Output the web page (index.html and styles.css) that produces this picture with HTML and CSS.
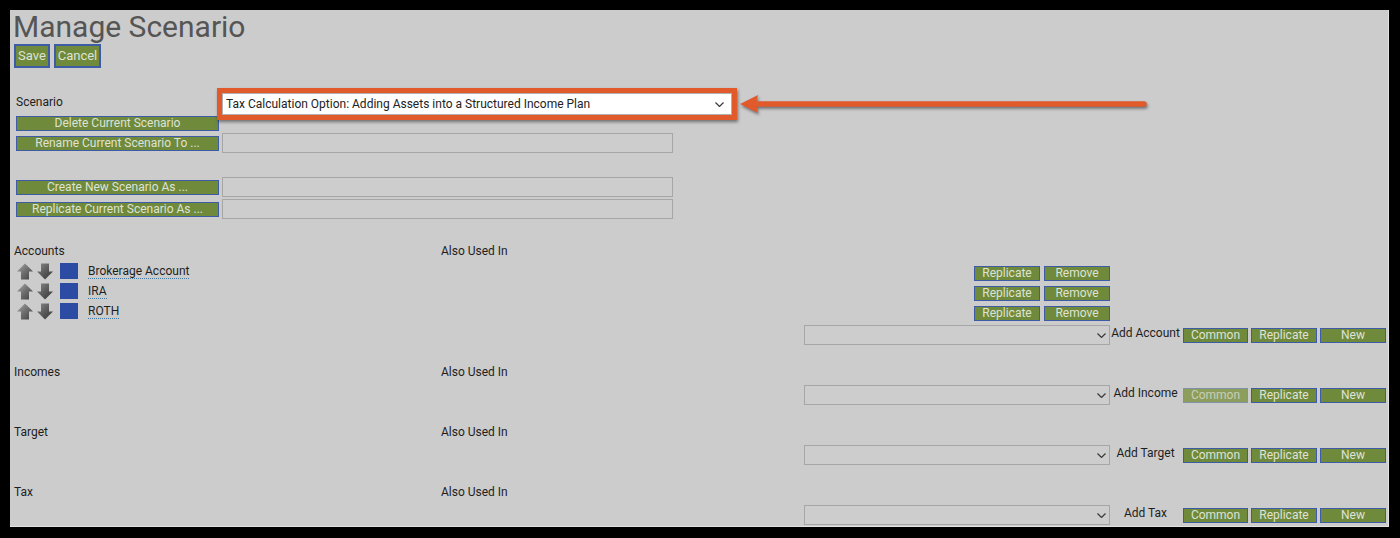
FILE: index.html
```html
<!DOCTYPE html>
<html>
<head>
<meta charset="utf-8">
<title>Manage Scenario</title>
<link rel="stylesheet" href="styles.css">
</head>
<body>
<svg class="defs" width="0" height="0" aria-hidden="true">
  <defs>
    <linearGradient id="gu" x1="0" y1="0" x2="1" y2="1"><stop offset="0" stop-color="#a8a8a8"/><stop offset="0.5" stop-color="#6e6e6e"/><stop offset="1" stop-color="#404040"/></linearGradient>
    <linearGradient id="gd" x1="0" y1="0" x2="1" y2="1"><stop offset="0" stop-color="#8a8a8a"/><stop offset="0.5" stop-color="#5a5a5a"/><stop offset="1" stop-color="#353535"/></linearGradient>
  </defs>
</svg>
<div class="panel">
  <h1 class="title">Manage Scenario</h1>
  <div class="toolbar">
    <button class="btn btn-lg btn-save">Save</button>
    <button class="btn btn-lg btn-cancel">Cancel</button>
  </div>

  <div class="scenario">
    <div class="sc-row sc-first">
      <span class="sc-label">Scenario</span>
      <span class="hl"><select class="sc-select"><option>Tax Calculation Option: Adding Assets into a Structured Income Plan</option></select><svg class="chev chev-sc" viewBox="0 0 9 5"><path d="M0.5 0.5 L4.5 4.5 L8.5 0.5"/></svg></span>
    </div>
    <div class="sc-row sc-delete">
      <button class="btn btn-wide">Delete Current Scenario</button>
    </div>
    <div class="sc-row sc-rename">
      <button class="btn btn-wide">Rename Current Scenario To ...</button>
      <input class="sc-input" type="text">
    </div>
    <div class="sc-row sc-create">
      <button class="btn btn-wide">Create New Scenario As ...</button>
      <input class="sc-input" type="text">
    </div>
    <div class="sc-row sc-repl">
      <button class="btn btn-wide">Replicate Current Scenario As ...</button>
      <input class="sc-input" type="text">
    </div>
  </div>

  <section class="group group-first">
    <div class="g-row g-head g-head-first"><span class="g-title">Accounts</span><span class="g-used">Also Used In</span></div>
    <div class="g-row g-item">
      <span class="g-name">
        <svg class="mv" viewBox="0 0 16 17"><path d="M8 0.5 L16 8.5 L12 8.5 L12 16.5 L4 16.5 L4 8.5 L0 8.5 Z" fill="url(#gu)"/></svg>
        <svg class="mv" viewBox="0 0 16 17"><path d="M4 0.5 L12 0.5 L12 8.5 L16 8.5 L8 16.5 L0 8.5 L4 8.5 Z" fill="url(#gd)"/></svg>
        <span class="swatch"></span>
        <span class="acct">Brokerage Account</span>
      </span>
      <span class="g-actions"><button class="btn btn-sm">Replicate</button><button class="btn btn-sm">Remove</button></span>
    </div>
    <div class="g-row g-item">
      <span class="g-name">
        <svg class="mv" viewBox="0 0 16 17"><path d="M8 0.5 L16 8.5 L12 8.5 L12 16.5 L4 16.5 L4 8.5 L0 8.5 Z" fill="url(#gu)"/></svg>
        <svg class="mv" viewBox="0 0 16 17"><path d="M4 0.5 L12 0.5 L12 8.5 L16 8.5 L8 16.5 L0 8.5 L4 8.5 Z" fill="url(#gd)"/></svg>
        <span class="swatch"></span>
        <span class="acct">IRA</span>
      </span>
      <span class="g-actions"><button class="btn btn-sm">Replicate</button><button class="btn btn-sm">Remove</button></span>
    </div>
    <div class="g-row g-item">
      <span class="g-name">
        <svg class="mv" viewBox="0 0 16 17"><path d="M8 0.5 L16 8.5 L12 8.5 L12 16.5 L4 16.5 L4 8.5 L0 8.5 Z" fill="url(#gu)"/></svg>
        <svg class="mv" viewBox="0 0 16 17"><path d="M4 0.5 L12 0.5 L12 8.5 L16 8.5 L8 16.5 L0 8.5 L4 8.5 Z" fill="url(#gd)"/></svg>
        <span class="swatch"></span>
        <span class="acct">ROTH</span>
      </span>
      <span class="g-actions"><button class="btn btn-sm">Replicate</button><button class="btn btn-sm">Remove</button></span>
    </div>
    <div class="g-row g-add">
      <span></span>
      <span class="sel-wrap"><select class="add-select"><option></option></select><svg class="chev" viewBox="0 0 9 5"><path d="M0.5 0.5 L4.5 4.5 L8.5 0.5"/></svg></span>
      <span class="add-label">Add Account</span>
      <span class="add-btns"><button class="btn btn-add">Common</button><button class="btn btn-add btn-rep">Replicate</button><button class="btn btn-add btn-new">New</button></span>
    </div>
  </section>

  <section class="group">
    <div class="g-row g-head"><span class="g-title">Incomes</span><span class="g-used">Also Used In</span></div>
    <div class="g-row g-add">
      <span></span>
      <span class="sel-wrap"><select class="add-select"><option></option></select><svg class="chev" viewBox="0 0 9 5"><path d="M0.5 0.5 L4.5 4.5 L8.5 0.5"/></svg></span>
      <span class="add-label">Add Income</span>
      <span class="add-btns"><button class="btn btn-add btn-dis">Common</button><button class="btn btn-add btn-rep">Replicate</button><button class="btn btn-add btn-new">New</button></span>
    </div>
  </section>

  <section class="group">
    <div class="g-row g-head"><span class="g-title">Target</span><span class="g-used">Also Used In</span></div>
    <div class="g-row g-add">
      <span></span>
      <span class="sel-wrap"><select class="add-select"><option></option></select><svg class="chev" viewBox="0 0 9 5"><path d="M0.5 0.5 L4.5 4.5 L8.5 0.5"/></svg></span>
      <span class="add-label">Add Target</span>
      <span class="add-btns"><button class="btn btn-add">Common</button><button class="btn btn-add btn-rep">Replicate</button><button class="btn btn-add btn-new">New</button></span>
    </div>
  </section>

  <section class="group">
    <div class="g-row g-head"><span class="g-title">Tax</span><span class="g-used">Also Used In</span></div>
    <div class="g-row g-add">
      <span></span>
      <span class="sel-wrap"><select class="add-select"><option></option></select><svg class="chev" viewBox="0 0 9 5"><path d="M0.5 0.5 L4.5 4.5 L8.5 0.5"/></svg></span>
      <span class="add-label">Add Tax</span>
      <span class="add-btns"><button class="btn btn-add">Common</button><button class="btn btn-add btn-rep">Replicate</button><button class="btn btn-add btn-new">New</button></span>
    </div>
  </section>

  <svg class="callout" viewBox="0 0 425 30" width="425" height="30">
    <path d="M10 16 L28 7 L26 16 L28 25 Z" fill="#e05a2c"/>
    <line x1="25" y1="16" x2="414" y2="16" stroke="#e05a2c" stroke-width="5.5" stroke-linecap="round"/>
  </svg>
</div>
</body>
</html>
```

FILE: styles.css
```css
html, body {
  margin: 0;
  padding: 0;
  background: #000;
}

body {
  font-family: Roboto, "Liberation Sans", Arial, sans-serif;
  color: #1e1e1e;
  width: 1400px;
  height: 538px;
  overflow: hidden;
}

.defs {
  position: absolute;
  width: 0;
  height: 0;
}

.panel {
  position: relative;
  margin: 10px 0 0 10px;
  width: 1379px;
  height: 517px;
  box-sizing: border-box;
  background: #cccccc;
  border-right: 1px solid #e2e2e2;
  border-bottom: 1px solid #e2e2e2;
  padding-left: 4px;
  padding-top: 2px;
}

.title {
  margin: 0 0 0 -1px;
  height: 30px;
  font-size: 30px;
  line-height: 30px;
  font-weight: 400;
  color: #555555;
}

.toolbar {
  display: flex;
  gap: 4px;
  margin-top: 2px;
}

.btn {
  font-family: Roboto, "Liberation Sans", Arial, sans-serif;
  font-size: 12px;
  line-height: 13px;
  color: #dfe2d6;
  background: #6f8a3b;
  border: 1px solid #3e5ca6;
  padding: 0;
  margin: 0;
  height: 15px;
  box-sizing: border-box;
  text-align: center;
  white-space: nowrap;
}

.btn-lg {
  height: 24px;
  font-size: 13px;
  line-height: 20px;
  border-width: 2px;
}

.btn-save {
  width: 36px;
}

.btn-cancel {
  width: 47px;
}

.btn-wide {
  width: 203px;
}

.scenario {
  padding-left: 2px;
  margin-top: 25px;
}

.sc-row {
  display: grid;
  grid-template-columns: 206px auto;
  align-items: center;
}

.sc-first {
  height: 22px;
  align-items: start;
}

.sc-label {
  font-size: 12px;
  line-height: 16px;
  padding-top: 1px;
}

.hl {
  position: relative;
  display: inline-block;
  justify-self: start;
  border: 5px solid #e05a2c;
  margin: -5px;
  box-shadow: 1px 2px 3px rgba(0, 0, 0, 0.45);
  line-height: 0;
}

.sc-select {
  appearance: none;
  -webkit-appearance: none;
  width: 510px;
  height: 22px;
  font-family: Roboto, "Liberation Sans", Arial, sans-serif;
  font-size: 12px;
  color: #222;
  background: #ffffff;
  border: 1px solid #b0b0b0;
  border-radius: 0;
  padding: 0 3px;
  margin: 0;
}

.chev {
  position: absolute;
  right: 4px;
  top: 8px;
  width: 9px;
  height: 5px;
  fill: none;
  stroke: #3a3a3a;
  stroke-width: 1.2;
}

.chev-sc {
  right: 8px;
  top: 9px;
}

.sc-delete {
  margin-top: 1px;
  height: 15px;
}

.sc-rename {
  margin-top: 2px;
  height: 20px;
}

.sc-create {
  margin-top: 24px;
  height: 20px;
}

.sc-repl {
  margin-top: 2px;
  height: 20px;
}

.sc-input {
  width: 451px;
  height: 20px;
  box-sizing: border-box;
  background: #cdcdcd;
  border: 1px solid #a6a6a6;
  border-radius: 0;
  margin: 0;
  padding: 0 2px;
}

.group {
  margin-top: 16px;
}

.group-first {
  margin-top: 22px;
}

.g-row {
  display: grid;
  grid-template-columns: 427px 669px 71px 1fr;
  align-items: center;
  height: 20px;
}

.g-head {
  font-size: 12px;
}

.g-title, .g-used {
  line-height: 16px;
  padding-top: 2px;
}

.g-head-first .g-title, .g-head-first .g-used {
  padding-top: 0;
}

.g-name {
  display: flex;
  align-items: center;
  padding-left: 3px;
}

.mv {
  width: 16px;
  height: 17px;
  margin-right: 4px;
}

.swatch {
  width: 18px;
  height: 16px;
  background: #2c4ca4;
  margin-left: 3px;
  margin-right: 10px;
}

.acct {
  font-size: 12px;
  line-height: 14px;
  border-bottom: 1px dotted #3f79a8;
}

.g-actions {
  display: flex;
  justify-content: flex-end;
  align-self: end;
  gap: 4px;
}

.btn-sm {
  width: 66px;
}

.g-add {
  margin-top: 4px;
}

.sel-wrap {
  position: relative;
  justify-self: end;
  width: 306px;
  height: 20px;
  line-height: 0;
}

.add-select {
  appearance: none;
  -webkit-appearance: none;
  width: 306px;
  height: 20px;
  box-sizing: border-box;
  background: #cdcdcd;
  border: 1px solid #a6a6a6;
  border-radius: 0;
  margin: 0;
  font-size: 12px;
}

.add-label {
  align-self: start;
  text-align: center;
  font-size: 12px;
  line-height: 16px;
  color: #1e1e1e;
}

.add-btns {
  display: flex;
  gap: 3px;
  padding-left: 2px;
}

.btn-add {
  width: 65px;
}

.btn-rep, .btn-new {
  width: 66px;
}

.btn-dis {
  background: #8c9d5c;
  border-color: #7f91a9;
  color: #c9cfb8;
}

.callout {
  position: absolute;
  left: 720px;
  top: 78px;
  filter: drop-shadow(1px 2px 1.5px rgba(0, 0, 0, 0.45));
}
```
